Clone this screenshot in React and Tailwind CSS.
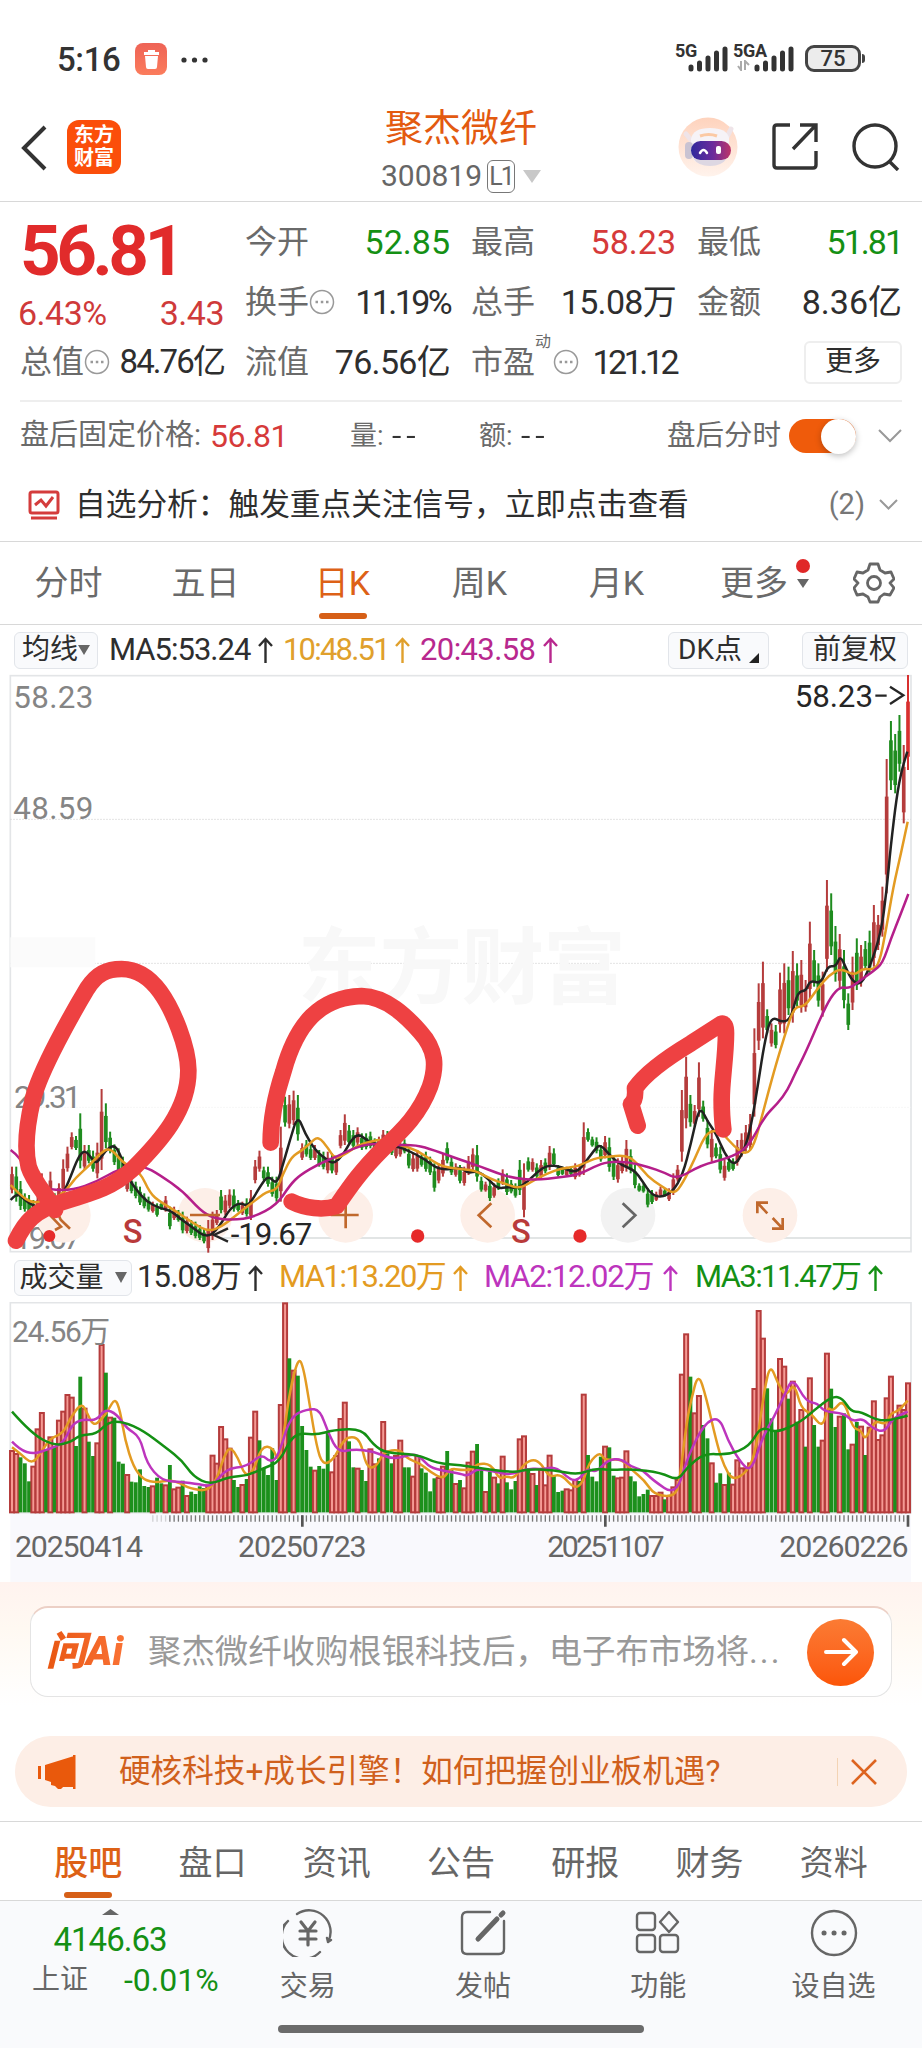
import clsx from "clsx";

const STEP = 12.8;
const X0 = 36;

// top of each volume bar + colour (R = up, G = down)
const VOLUME = `603R 612R 622G 640G 694G 650R 538R 489R 597G 562R 590G 512R 485R 435R 443R 588G 380G 476R 575G 618G
580R 285R 368G 503R 503G 635G 641G 675R 695G 697G 658G 708G 711G 709R 683G 700G 706R 645G 718R 713R
692G 738R 725G 732G 709G 714G 706R 617R 641R 531R 568R 596R 690G 711G 705R 687G 563R 485R 571G 655G
675G 595G 690G 465R 160R 325G 362R 377G 528G 600G 650G 662R 648G 656G 543G 667R 618R 507R 458R 574G
652G 656R 660G 693G 598R 643R 625G 516R 610G 640G 618R 572R 652G 652G 680R 618R 655G 668G 724G 685G
684R 650R 603G 660G 702R 690G 715R 638R 605R 582G 655G 726R 665G 683R 700G 620R 697G 718G 693G 568R
559R 655G 672R 705G 660R 706R 617R 675G 726G 722G 718R 721R 690R 693G 434R 615G 680G 694G 620G 590R
592G 677G 685R 683R 604R 679G 694G 739G 732G 719G 738R 738R 728R 748G 738R 712R 690R 374R 253R 380G
490R 438R 525G 565G 640R 698G 670G 705R 668G 704R 631R 655R 656R 640R 417R 183R 266R 415G 505G 545G
327R 350R 446G 395R 515G 480R 590G 385R 525G 590G 572R 311R 416G 531G 500R 490G 598G 584R 516G 530R
615G 533R 454R 570R 556R 445R 380R 505G 467R 480R 400R`;

// high,low + colour for every trading day
const CANDLES = `800,880R 800,905G 843,930G 880,935G 885,945G 900,945G 890,930R 820,920R 860,920G 815,910R
880,940G 850,900R 778,880R 740,815R 697,748R 708,750G 640,805G 735,810R 735,790G 752,815G
728,835R 567,810R 610,745G 695,760G 733,795G 745,825G 770,830G 820,875R 830,880G 845,895G
860,915G 880,925G 890,935G 905,938R 910,950G 905,930G 888,935R 920,988G 920,960R 930,965G
935,1000G 950,1000R 960,1005G 965,1015G 975,1020G 985,1030G 960,1058R 935,1020R 930,975R 870,940G
885,945R 868,925R 868,935G 900,935G 905,945R 895,950G 870,960R 780,850R 752,815R 800,840G
800,860G 830,890G 830,905G 680,905R 590,680G 585,685R 572,675R 585,722G 730,780R 720,770G
735,780G 735,780R 750,800G 755,808G 755,820R 760,820G 770,825R 690,745R 643,735R 675,735G
690,745G 682,735R 700,750G 700,748G 695,745G 715,760G 710,745R 690,740R 693,750G 720,765G
730,775R 720,770R 718,760G 745,805G 760,815R 750,815R 760,800G 755,815G 770,825G 790,875G
790,850R 760,830R 727,790G 770,825G 790,830R 795,850G 800,857R 768,825R 745,810R 735,845G
830,875G 845,875R 840,903G 850,893R 835,870G 808,855R 820,885G 840,880G 850,893G 780,885G
790,952R 772,815G 775,815R 790,835G 780,835R 775,820G 738,810R 745,800G 795,830G 800,825G
800,830R 800,825G 790,838R 795,830R 667,825R 685,725G 710,740G 712,760G 735,785G 708,775R
713,815G 770,840G 775,848R 770,820R 720,815R 748,820G 795,865G 850,875G 850,878G 865,922G
870,912G 875,903R 860,890R 865,890G 865,903R 820,885R 795,845R 570,785R 470,685R 585,680G
615,680R 487,650R 602,665G 660,745G 690,785R 730,775G 740,820G 780,842R 775,815G 775,812G
720,797R 700,770R 675,755R 642,750R 385,650R 250,450R 185,415R 328,400G 370,440R 375,445G
218,398R 190,400R 200,345G 153,368R 190,320G 180,338R 240,335R 65,300R 150,260G 190,320G
215,350R -60,215R -20,165G 78,245G 102,265R 150,325G 280,390G 170,330R 115,270G 135,260R
123,210G 92,220G 15,200R 45,150R -40,110R -423,-20R -537,-330G -498,-320G -555,-385G -465,-230R
-675,-390R`;

const volumes = VOLUME.split(/\s+/).map((v) => ({ top: parseInt(v), up: v.endsWith("R") }));
const candles = CANDLES.split(/\s+/).map((c) => {
  const [high, low] = c.slice(0, -1).split(",").map(Number);
  return { high, low, up: c.endsWith("R") };
});

// smooth a list of "x,y" points with midpoint quadratics
const smooth = (text) => {
  const p = text.trim().split(/\s+/).map((s) => s.split(",").map(Number));
  let d = `M${p[0][0]} ${p[0][1]}`;
  for (let i = 1; i < p.length - 1; i++) {
    d += ` Q${p[i][0]} ${p[i][1]} ${(p[i][0] + p[i + 1][0]) / 2} ${(p[i][1] + p[i + 1][1]) / 2}`;
  }
  const last = p[p.length - 1];
  return d + ` L${last[0]} ${last[1]}`;
};

const MA5 = smooth(`32,900 50,878 75,900 100,918 130,925 165,915 190,880 210,835 235,770 255,750 275,775 290,792 315,752 342,734 360,760 385,835 410,870 440,905 480,925 510,930 540,955 580,985 622,1014 655,985 690,925 720,908 745,920 780,860 805,825 830,855 850,790 870,720 893,645 915,700 945,750 975,775 1000,793 1030,765 1050,725 1075,700 1105,725 1140,735 1190,738 1225,752 1270,775 1320,812 1383,800
1403,820 1433,812 1463,835 1493,867 1523,860 1553,865 1583,845 1613,815 1643,795 1683,800 1728,820 1758,785 1783,750 1801,732 1833,770 1863,795 1903,810 1928,845 1953,882 1983,893 2018,875 2048,825 2073,730 2093,640 2105,628 2123,665 2148,700 2173,760 2203,800 2233,750 2253,680 2273,560 2293,430 2313,348 2348,368 2373,355 2393,275 2418,273 2430,240 2463,252 2483,198 2508,200 2521,166 2538,205 2558,245 2583,254 2608,205 2643,100 2660,-30 2672,-160 2690,-310 2705,-390 2722,-445`);
const MA10 = smooth(`32,855 60,885 95,908 125,905 160,900 200,870 225,835 270,795 300,760 330,742 370,790 420,815 450,880 480,905 530,935 580,970 625,995 665,980 710,945 760,905 800,875 830,870 850,820 875,770 905,752 930,730 955,708 985,745 1005,778 1040,760 1075,735 1110,725 1150,717 1200,735 1250,750 1300,785 1330,800 1383,808
1423,810 1473,838 1513,850 1558,867 1603,840 1643,820 1683,805 1733,800 1783,775 1823,770 1873,766 1903,780 1943,830 1983,858 2023,883 2048,850 2083,780 2113,710 2138,690 2168,700 2203,740 2238,765 2263,735 2288,640 2323,510 2353,410 2383,318 2413,322 2453,265 2488,225 2523,205 2563,227 2588,205 2618,210 2638,190 2658,90 2680,-40 2703,-140 2723,-235`);
const MA20 = smooth(`32,750 60,770 100,850 150,870 220,870 290,845 360,805 430,797 480,825 550,875 600,930 640,955 700,960 760,952 830,915 870,855 900,825 960,790 1010,770 1060,745 1110,730 1180,735 1250,735 1300,750 1383,780
1443,800 1493,820 1543,835 1613,840 1673,832 1733,825 1783,800 1823,785 1883,785 1943,800 1993,818 2033,837 2103,795 2183,775 2243,745 2293,650 2333,610 2363,570 2383,525 2418,455 2463,350 2493,290 2521,260 2548,266 2583,240 2618,215 2648,190 2673,115 2701,45 2725,-18`);

const VMA1 = smooth(`36,592 60,610 97,643 125,605 150,565 190,550 210,505 245,458 262,490 280,528 305,508 325,480 345,444 360,480 375,570 400,650 430,690 470,698 510,690 540,700 570,715 620,724 650,690 670,625 690,588 715,625 735,678 760,665 785,588 820,592 835,640 850,560 870,420 895,322 910,350 930,470 950,590 968,645 1000,630 1025,580 1045,560 1080,565 1100,655 1130,650 1150,605 1200,598 1220,625 1260,640 1290,665 1330,688 1350,655 1383,660
1413,660 1433,640 1473,642 1498,688 1518,678 1543,686 1573,640 1601,628 1623,640 1648,682 1683,672 1723,716 1748,700 1768,635 1801,606 1813,632 1863,626 1893,658 1933,690 1963,735 2023,740 2038,700 2058,530 2073,450 2095,368 2118,440 2153,590 2173,650 2198,692 2243,665 2268,600 2293,420 2311,342 2333,400 2358,440 2383,398 2403,475 2433,490 2468,534 2483,470 2498,485 2531,446 2558,535 2583,540 2596,572 2623,510 2658,525 2673,488 2693,485 2723,452`);
const VMA2 = smooth(`36,575 60,600 100,612 140,600 190,580 215,525 245,508 290,512 315,477 350,492 380,535 420,560 440,640 485,692 540,695 600,703 635,710 680,655 740,650 785,612 810,637 835,620 870,500 925,476 960,480 985,550 1015,607 1060,598 1120,603 1180,630 1240,610 1265,625 1290,652 1330,662 1383,672
1403,678 1433,655 1483,665 1533,675 1583,655 1628,658 1668,650 1713,692 1738,688 1763,655 1788,668 1823,630 1863,626 1893,650 1928,660 1958,690 2028,738 2063,620 2113,520 2158,500 2183,570 2218,632 2253,668 2288,560 2323,500 2353,435 2378,382 2418,455 2453,460 2473,485 2533,490 2558,515 2588,505 2618,535 2653,547 2678,505 2723,485`);
const VMA3 = smooth(`36,485 95,552 165,588 215,575 240,555 290,552 325,515 370,515 430,542 500,595 545,630 580,680 630,704 690,680 740,678 790,655 840,635 880,548 950,555 1000,540 1085,536 1120,585 1160,610 1250,612 1310,640 1383,645
1443,655 1543,668 1583,657 1663,660 1733,675 1783,655 1833,660 1893,657 1983,668 2033,692 2063,650 2113,610 2183,615 2248,590 2283,528 2328,550 2403,515 2443,480 2498,438 2528,445 2553,485 2583,485 2643,517 2723,497`);

const Signal = () => (
  <svg width="40" height="26" viewBox="0 0 40 26" stroke="#333" strokeWidth="5" strokeLinecap="round">
    <path d="M3 21v2M11.500 17v6M20 12v11M28.500 7v16M37 3v20" />
  </svg>
);

const StatusBar = () => (
  <div className="flex h-[92px] items-start pl-[57px] pr-[57px] pt-[43px] text-[#333]">
    <span className="text-[33px] leading-[34px] font-medium tracking-[-0.4px]">5:16</span>
    <span className="ml-[15px] flex size-8 items-center justify-center rounded-lg bg-gradient-to-b from-[#ee6356] to-[#fb7c5c]">
      <svg width="17" height="19" viewBox="0 0 17 19" fill="#fff">
        <path d="M5 0h7v2h4v3H1V2h4zM2 6h13l-1 11q0 2-2 2H5q-2 0-2-2z" />
      </svg>
    </span>
    <svg className="ml-[14px] mt-[14px]" width="27" height="6" fill="#333">
      <circle cx="3" cy="3" r="2.6" />
      <circle cx="13.5" cy="3" r="2.6" />
      <circle cx="24" cy="3" r="2.6" />
    </svg>
    <span className="ml-auto -mt-[1px] -mr-[9px] text-[18px] leading-[18px] font-bold tracking-[-0.3px]">5G</span>
    <div className="mt-[3px]"><Signal /></div>
    <div className="ml-[5px] w-[28px]">
      <div className="-mt-[1px] text-[18px] leading-[18px] font-bold tracking-[-0.3px]">5GA</div>
      <svg className="ml-1" width="14" height="11" stroke="#aaa" strokeWidth="2" fill="none">
        <path d="M1 6l3 4V1M8 10V1l4 4" />
      </svg>
    </div>
    <div className="-ml-[7px] mt-[3px]"><Signal /></div>
    <div className="ml-[11px] mt-[2px] flex items-center">
      <span className="flex h-[27px] w-[56px] items-center justify-center rounded-[9px] border-[3px] border-[#444] bg-[#ececec] text-[22px] leading-none font-medium">75</span>
      <span className="ml-[1px] h-[9px] w-[3px] rounded-r bg-[#444]" />
    </div>
  </div>
);

const Robot = () => (
  <svg width="60" height="60" viewBox="0 0 60 60">
    <defs>
      <linearGradient id="visor">
        <stop stopColor="#2f2a9d" />
        <stop offset=".55" stopColor="#6b2b9c" />
        <stop offset="1" stopColor="#bd3468" />
      </linearGradient>
      <linearGradient id="halo" x2="0" y2="1">
        <stop stopColor="#fed3bd" />
        <stop offset="1" stopColor="#fff3ec" />
      </linearGradient>
    </defs>
    <circle cx="30" cy="30" r="29.5" fill="url(#halo)" />
    <path d="M8 17l5 6M53 12l-4 8" stroke="#efe4e8" strokeWidth="5" strokeLinecap="round" />
    <path d="M13 34V22q2-11 19-11t19 10v14q-2 13-20 13T13 34z" fill="#f6f3f7" />
    <path d="M22 19q9-3 17 0" stroke="#fbc9a4" strokeWidth="3" fill="none" />
    <rect x="7" y="25" width="8" height="17" rx="4" fill="#c9c3d2" />
    <path d="M15 41h34q-5 8-17 8t-17-8z" fill="#ddd7e2" />
    <rect x="13" y="24" width="40" height="19" rx="9.5" fill="url(#visor)" />
    <path d="M22 36q3.500-6 7 0" stroke="#fff" strokeWidth="2.5" fill="none" strokeLinecap="round" />
    <rect x="38" y="29" width="5" height="8" rx="2" fill="#fff" />
  </svg>
);

const Header = () => (
  <div className="flex h-[110px] items-start border-b border-[#d8d8d8]">
    <svg className="ml-5 mt-[33px]" width="28" height="46" fill="none" stroke="#333" strokeWidth="4">
      <path d="M25 2L4 23l21 21" />
    </svg>
    <div className="ml-[19px] mt-[28px] flex size-[54px] flex-col items-center justify-center rounded-xl bg-[#fb4e0a] text-[20px] leading-[23px] font-bold text-white">
      <span>东方</span>
      <span>财富</span>
    </div>
    <div className="ml-[240px] flex w-[200px] flex-col items-center pt-[15px]">
      <span className="text-[38px] leading-[42px] text-[#e35a10]">聚杰微纤</span>
      <div className="mt-[10px] flex items-center text-[#666]">
        <span className="text-[30px] leading-[34px]">300819</span>
        <span className="ml-[5px] flex h-[33px] w-[28px] items-center justify-center rounded-md border-[1.5px] border-[#777] text-[25px] leading-none tracking-[-2px]">L1</span>
        <svg className="ml-2" width="18" height="13"><path d="M0 0h18L9 13z" fill="#c8c8c8" /></svg>
      </div>
    </div>
    <div className="ml-auto flex items-center gap-[34px] pr-[22px] pt-[25px]">
      <Robot />
      <svg width="46" height="48" viewBox="0 0 46 48" fill="none" stroke="#333" strokeWidth="3.4">
        <path d="M18 2H5Q2 2 2 5v37q0 3 3 3h36q3 0 3-3V28M28 2h16v17M44 2L21 26" />
      </svg>
      <svg width="48" height="48" viewBox="0 0 48 48" fill="none" stroke="#333" strokeWidth="3.4">
        <circle cx="23" cy="23" r="21" />
        <path d="M37 38l9 9" />
      </svg>
    </div>
  </div>
);

const Dots = () => (
  <svg width="26" height="26" viewBox="0 0 26 26" fill="none" stroke="#999" strokeWidth="1.5">
    <circle cx="13" cy="13" r="11.5" />
    <path d="M6.500 13h2.500M11.800 13h2.500M17 13h2.500" strokeWidth="2.5" />
  </svg>
);

const Cell = ({ label, value, color = "text-[#2e2e2e]", tight, dots, sup }) => (
  <div className="flex h-[60px] w-[205px] items-center justify-between whitespace-nowrap">
    <span className="flex items-center text-[32px] text-[#6a6a6a]">
      {label}
      {sup && <sup className="-mr-[14px] -top-5 text-[16px]">{sup}</sup>}
      {dots && <span className={sup && "ml-[16px]"}><Dots /></span>}
    </span>
    <span className={clsx("text-[34px]", color, tight)}>{value}</span>
  </div>
);

const Chevron = () => (
  <svg width="24" height="14" viewBox="0 0 24 14" fill="none" stroke="#999" strokeWidth="2">
    <path d="M1 1l11 11L23 1" />
  </svg>
);

const Quote = () => (
  <div className="h-[340px] border-b border-[#d8d8d8]">
    <div className="flex h-[198px] gap-[21px] px-5 pt-[10px]">
      <div className="w-[205px]">
        <div className="h-[82px] text-[71px] leading-[78px] font-bold tracking-[-4.6px] text-[#e12b2b]">56.81</div>
        <div className="-ml-[2px] flex h-[38px] items-center justify-between text-[34px] tracking-[-0.5px] text-[#cf3a3a]">
          <span>6.43%</span>
          <span>3.43</span>
        </div>
        <div className="flex h-[60px] items-center justify-between whitespace-nowrap text-[32px] text-[#6a6a6a]">
          <span className="flex items-center">总值<Dots /></span>
          <span className="text-[33px] tracking-[-1.9px] text-[#2e2e2e]">84.76亿</span>
        </div>
      </div>
      <div>
        <Cell label="今开" value="52.85" color="text-[#149014]" />
        <Cell label="换手" value="11.19%" tight="tracking-[-2.6px]" dots />
        <Cell label="流值" value="76.56亿" tight="tracking-[-0.7px]" />
      </div>
      <div>
        <Cell label="最高" value="58.23" color="text-[#d63a3a]" />
        <Cell label="总手" value="15.08万" tight="tracking-[-0.7px]" />
        <Cell label="市盈" value="121.12" tight="tracking-[-3.5px]" sup="动" dots />
      </div>
      <div>
        <Cell label="最低" value="51.81" color="text-[#149014]" tight="tracking-[-2px]" />
        <Cell label="金额" value="8.36亿" />
        <div className="flex h-[60px] items-center justify-end">
          <span className="flex h-[43px] w-[98px] items-center justify-center rounded-md border-2 border-[#eee] text-[28px] text-[#2e2e2e]">更多</span>
        </div>
      </div>
    </div>
    <div className="mx-5 flex h-[70px] items-center border-t-2 border-[#eee] text-[29px] whitespace-nowrap text-[#6a6a6a]">
      <span className="w-[190px]">盘后固定价格:</span>
      <span className="w-[140px] text-[32px] tracking-[-0.5px] text-[#d63a3a]">56.81</span>
      <span className="flex w-[129px] items-center text-[27px]">
        量: <span className="ml-2 tracking-[4px] text-[#333] scale-x-125 origin-left">--</span>
      </span>
      <span className="flex items-center text-[27px]">
        额: <span className="ml-2 tracking-[4px] text-[#333] scale-x-125 origin-left">--</span>
      </span>
      <span className="ml-auto text-[28.5px]">盘后分时</span>
      <span className="ml-[8px] flex h-[34px] w-[67px] justify-end rounded-full bg-[#ef5b0b]">
        <span className="size-[35px] rounded-full bg-white shadow-[0_2px_6px_rgba(0,0,0,0.25)]" />
      </span>
      <span className="ml-[22px]"><Chevron /></span>
    </div>
    <div className="flex h-[70px] items-center pl-7 pr-6 whitespace-nowrap">
      <svg width="32" height="30" viewBox="0 0 32 30" fill="none" stroke="#d43c3c" strokeWidth="3">
        <rect x="2" y="2" width="28" height="21" rx="2" />
        <path d="M7 15l6-5 5 6 7-9M3 28h26" />
      </svg>
      <span className="ml-[15px] text-[30.7px] text-[#2e2e2e]">自选分析：触发重点关注信号，立即点击查看</span>
      <span className="ml-auto mr-[14px] text-[29px] text-[#777]">(2)</span>
      <svg width="19" height="12" fill="none" stroke="#999" strokeWidth="2"><path d="M1 1l8.500 8.500L18 1" /></svg>
    </div>
  </div>
);

const PERIODS = ["分时", "五日", "日K", "周K", "月K"];

const Periods = () => (
  <div className="flex h-[83px] items-center border-b border-[#d8d8d8] text-[34px] text-[#6a6a6a]">
    {PERIODS.map((p) => (
      <div key={p} className={clsx("relative flex h-full w-[137px] items-center justify-center", p === "日K" && "text-[#dd6116]")}>
        {p}
        {p === "日K" && <span className="absolute bottom-[5px] h-[6px] w-[48px] rounded-full bg-[#d65f17]" />}
      </div>
    ))}
    <div className="relative ml-[35px] flex items-center">
      更多
      <svg className="ml-[9px]" width="12" height="9"><path d="M0 0h12L6 9z" fill="#666" /></svg>
      <span className="absolute top-[1px] -right-[1px] size-[14px] rounded-full bg-[#e02828]" />
    </div>
    <svg className="ml-[44px]" width="42" height="42" viewBox="0 0 42 42" fill="none" stroke="#666" strokeWidth="2.8" strokeLinejoin="round">
      <path d="M17 2h8l2 6 5 3 6-1 3 7-4 4 4 5-4 7-6-1-4 3-2 5h-8l-2-5-5-3-6 1-3-7 4-5-4-4 3-7 6 1 5-3z" />
      <circle cx="21" cy="21" r="6.5" />
    </svg>
  </div>
);

const Up = () => (
  <svg width="15" height="26" viewBox="0 0 15 26" fill="none" stroke="currentColor" strokeWidth="2.4">
    <path d="M7.500 26V2M1 9l6.500-7L14 9" />
  </svg>
);

const Legend = ({ color, width, children }) => (
  <span className={clsx("flex shrink-0 items-center justify-between text-[31px] whitespace-nowrap", color, width)}>
    {children}
    <Up />
  </span>
);

const pill = "flex shrink-0 items-center justify-center rounded-md border border-[#e2e5ea] bg-[#f9fafc] whitespace-nowrap text-[#2e2e2e]";

const MainLegend = () => (
  <div className="flex h-[50px] items-center pl-[14px] pr-[14px]">
    <span className={clsx(pill, "h-[37px] w-[84px] text-[28px]")}>
      均线
      <svg width="12" height="10"><path d="M0 0h12L6 10z" fill="#666" /></svg>
    </span>
    <div className="ml-[11px] flex gap-[10px]">
      <Legend color="text-[#2e2e2e] tracking-[-1px]" width="w-[164px]">MA5:53.24</Legend>
      <Legend color="text-[#e0a02c] tracking-[-1.8px]" width="w-[127px]">10:48.51</Legend>
      <Legend color="text-[#b8288e] tracking-[-0.6px]" width="w-[138px]">20:43.58</Legend>
    </div>
    <span className={clsx(pill, "ml-auto h-[37px] w-[101px] gap-[7px] text-[28px]")}>
      DK点
      <svg className="mt-4" width="10" height="10"><path d="M10 0v10H0z" fill="#222" /></svg>
    </span>
    <span className={clsx(pill, "ml-[33px] h-[37px] w-[106px] text-[28px]")}>前复权</span>
  </div>
);

const Scribbles = () => (
  <g fill="none" stroke="#ee4142" strokeWidth="50" strokeLinecap="round" strokeLinejoin="round">
    <path d="M48 1022C75 965 105 930 190 905C290 875 340 860 400 805C480 725 566 630 565 510C564 440 520 330 480 275C440 220 400 207 365 207C320 207 290 222 262 265C220 335 120 510 98 600C78 685 74 750 86 800C100 845 140 885 165 930" />
    <path d="M812 728C812 680 822 600 850 515C890 370 960 292 1085 288C1160 290 1220 350 1260 395C1310 450 1310 500 1290 560C1260 640 1210 690 1150 745C1080 815 1050 860 1010 918C970 932 915 925 875 905" />
    <path d="M1913 677L1893 612Q1908 600 1905 565C1943 510 2023 460 2073 430L2163 372Q2178 366 2178 400C2178 470 2165 540 2165 600Q2165 650 2170 688" />
  </g>
);

const PriceChart = () => (
  <svg className="block overflow-visible" width="922" height="578" viewBox="0 -675 2766 1734" fontFamily="Roboto, 'Noto Sans CJK SC', sans-serif">
    <rect x="31" y="-673" width="2702" height="1728" fill="none" stroke="#e3e5e7" strokeWidth="5" />
    <g stroke="#d5d5d5" strokeWidth="3" strokeDasharray="4 5">
      <path d="M31 -242H2733M31 190H2733" />
      <path d="M31 622H2733" stroke="#f2f2f2" />
    </g>
    <path d="M600 1014H2733" stroke="#d9dcdc" strokeWidth="5" />
    <text x="893" y="290" fontSize="248" fontWeight="bold" textLength="985" fill="#f8f8f8">东方财富</text>
    <rect x="31" y="112" width="255" height="90" fill="#fbfbfb" />
    <g fill="#858585" fontSize="94">
      <text x="40" y="-575" textLength="240">58.23</text>
      <text x="40" y="-243" textLength="240">48.59</text>
      <text x="42" y="624" textLength="202">29.31</text>
      <text x="42" y="1047" textLength="202">19.67</text>
    </g>
    <g fill="#fdefe8">
      {[190, 615, 1037, 1463, 2310].map((x) => <circle key={x} cx={x} cy="946" r="82" />)}
      <circle cx="1884" cy="946" r="82" fill="#f2f2f2" />
    </g>
    {candles.map((c, i) => {
      const x = X0 + i * STEP;
      const h = c.low - c.high;
      const color = c.up ? "#b53c3c" : "#1f8c1f";
      const last = i === candles.length - 1;
      return (
        <g key={i} fill={last ? "#d8302f" : color}>
          <rect x={x - 3} y={c.high} width="6" height={h} />
          <rect x={x - 5.5} y={c.high + h * 0.28} width="11" height={h * 0.58} />
        </g>
      );
    })}
    <g fill="none" strokeWidth="7.5" strokeLinejoin="round">
      <path d={MA5} stroke="#222" />
      <path d={MA10} stroke="#e39b22" />
      <path d={MA20} stroke="#b51f8a" />
    </g>
    <g fill="none" stroke="#c0682c" strokeWidth="8">
      <path d="M145 940l38 40-18 10M172 935l10 24 28 27" />
      <path d="M570 945h90M992 945h84M1037 905v80" />
      <path d="M1474 910l-38 36 38 36" />
      <path d="M1868 910l38 36-38 36" stroke="#666" />
      <path d="M2272 940v-32h32M2272 908l30 32M2348 954v32h-32M2348 986l-30-32" />
    </g>
    <g fill="#e62a2a">
      <circle cx="148" cy="1008" r="18" />
      <circle cx="1253" cy="1008" r="20" />
      <circle cx="1740" cy="1008" r="20" />
    </g>
    <g fill="#b93a3a" fontSize="98" fontWeight="500">
      <text x="368" y="1028">S</text>
      <text x="1533" y="1028">S</text>
    </g>
    <g fill="#262626" fontSize="94">
      <text x="692" y="1036" textLength="245">-19.67</text>
      <text x="2384" y="-580" textLength="235">58.23</text>
    </g>
    <path d="M2626 -613h34M2670 -640l40 26-40 26M684 985l-42 20 42 20" fill="none" stroke="#262626" strokeWidth="7" />
    <Scribbles />
  </svg>
);

const VolumeLegend = () => (
  <div className="flex h-[49px] items-center pl-[14px]">
    <span className={clsx(pill, "h-[36px] w-[118px] gap-[11px] text-[28px]")}>
      成交量
      <svg width="12" height="11"><path d="M0 0h12L6 11z" fill="#666" /></svg>
    </span>
    <div className="ml-[5px] flex tracking-[-0.8px]">
      <Legend color="text-[#2e2e2e]" width="w-[126px]">15.08万</Legend>
      <Legend color="ml-[16px] text-[#e39b22] tracking-[-1.5px]" width="w-[189px]">MA1:13.20万</Legend>
      <Legend color="ml-[16px] text-[#bd35bd] tracking-[-1.2px]" width="w-[194px]">MA2:12.02万</Legend>
      <Legend color="ml-[17px] text-[#149014] tracking-[-1.6px]" width="w-[188px]">MA3:11.47万</Legend>
    </div>
  </div>
);

const VolumeChart = () => (
  <svg className="block" width="922" height="280" viewBox="0 156 2766 840" fontFamily="Roboto, 'Noto Sans CJK SC', sans-serif">
    <rect x="31" y="788" width="2702" height="208" fill="#f9f9fd" />
    <rect x="31" y="158" width="2702" height="630" fill="#fff" stroke="#e3e5e7" strokeWidth="5" />
    {volumes.map((v, i) => (
      <rect
        key={i}
        x={X0 + i * STEP - (v.up ? 6 : 5.8)}
        y={v.top}
        width={v.up ? 12 : 11.6}
        height={787 - v.top}
        fill={v.up ? "#f59a94" : "#1c901c"}
        stroke={v.up ? "#b53c3c" : "none"}
        strokeWidth="6"
      />
    ))}
    <g fill="none" strokeWidth="7.5" strokeLinejoin="round">
      <path d={VMA1} stroke="#e39b22" />
      <path d={VMA2} stroke="#bd35bd" />
      <path d={VMA3} stroke="#149014" />
    </g>
    <text x="36" y="277" fontSize="90" textLength="295" fill="#858585">24.56万</text>
    <g stroke="#777" strokeWidth="4">
      {volumes.map((_, i) => i > 32 && <path key={i} d={`M${X0 + i * STEP} 796v19`} strokeOpacity={i < 37 ? 0.3 : 1} />)}
    </g>
    <path d="M907 796v34M1816 796v34M2724 796v34" stroke="#555" strokeWidth="8" />
    <g fill="#666" fontSize="91">
      <text x="45" y="921" textLength="384">20250414</text>
      <text x="714" y="921" textLength="386">20250723</text>
      <text x="1642" y="921" textLength="352">20251107</text>
      <text x="2338" y="921" textLength="388">20260226</text>
    </g>
  </svg>
);

const AskAi = () => (
  <div className="h-[154px] bg-gradient-to-b from-[#fff3ef] via-[#fff9f2] via-30% to-white to-80% px-[30px] pt-[24px]">
    <div className="flex h-[91px] items-center rounded-[18px] border-[1.5px] border-[#e4e4e4] border-t-2 border-t-[#ecd0c6] bg-white pl-[15px] pr-[17px] whitespace-nowrap">
      <span className="w-[102px] bg-gradient-to-r from-[#e8560f] to-[#ff7a3c] bg-clip-text text-[40px] font-black text-transparent italic">问Ai</span>
      <span className="text-[33.4px] text-[#999]">
        聚杰微纤收购根银科技后，电子布市场将<span className="tracking-[2px]">...</span>
      </span>
      <span className="ml-auto flex size-[67px] shrink-0 items-center justify-center rounded-full bg-gradient-to-b from-[#fb7b33] to-[#fc5506]">
        <svg width="34" height="30" viewBox="0 0 34 30" fill="none" stroke="#fff" strokeWidth="4" strokeLinecap="round" strokeLinejoin="round">
          <path d="M2 15h29M20 3l12 12-12 12" />
        </svg>
      </span>
    </div>
  </div>
);

const Banner = () => (
  <div className="mx-[15px] flex h-[71px] items-center rounded-full bg-[#fdeee6] pl-[23px] pr-[30px] whitespace-nowrap">
    <svg width="38" height="34" viewBox="0 0 38 34" fill="#e9590c">
      <path d="M0 11h3v13H0zM7 10L36 1v31H25q-2 3-5 2l-3-3-4-1v-3l-6-2zM35 0h2.500v34H35z" />
    </svg>
    <span className="ml-[43px] text-[31.6px] text-[#d0601c]">硬核科技+成长引擎！如何把握创业板机遇?</span>
    <span className="ml-auto h-[28px] w-px bg-[#f3d3b4]" />
    <svg className="ml-[13px]" width="26" height="26" fill="none" stroke="#dd6420" strokeWidth="2.6">
      <path d="M1 1l24 24M25 1L1 25" />
    </svg>
  </div>
);

const TABS = ["股吧", "盘口", "资讯", "公告", "研报", "财务", "资料"];

const Tabs = () => (
  <div className="mt-[14px] flex h-[80px] border-t border-b border-[#d8d8d8] px-[26px] text-[34px] text-[#666]">
    {TABS.map((t, i) => (
      <div key={t} className={clsx("relative flex flex-1 items-center justify-center pt-[5px]", i === 0 && "font-medium text-[#dd6116]")}>
        {t}
        {i === 0 && <span className="absolute bottom-[2px] h-[6px] w-[48px] rounded-full bg-[#d65f17]" />}
      </div>
    ))}
  </div>
);

const ACTIONS = [
  {
    label: "交易",
    icon: (
      <>
        <path d="M14 5A21.500 21.500 0 0 1 45 33M37 43A21.500 21.500 0 0 1 5 12M1 16l4-4M45 33l3-2M45 33l-1-4" />
        <path d="M18 13l7 9 7-9M17 22h16M17 30h16M25 22v14" strokeWidth="3.2" />
      </>
    ),
  },
  {
    label: "发帖",
    icon: (
      <>
        <path d="M32 3H9Q4 3 4 8v32q0 5 5 5h32q5 0 5-5V12" />
        <path d="M20 30L39 10M43 6l2-2" strokeWidth="5" />
      </>
    ),
  },
  {
    label: "功能",
    icon: (
      <>
        <rect x="4" y="4" width="18" height="17" rx="3" />
        <rect x="4" y="26" width="18" height="17" rx="3" />
        <rect x="27" y="26" width="18" height="17" rx="3" />
        <path d="M36 3l9 10-9 10-9-10z" strokeLinejoin="round" />
      </>
    ),
  },
  {
    label: "设自选",
    icon: (
      <>
        <circle cx="25" cy="24" r="22" />
        <path d="M15 24h.1M25 24h.1M35 24h.1" strokeWidth="5" />
      </>
    ),
  },
];

const BottomBar = () => (
  <div className="flex h-[148px] flex-col items-center bg-[#f9fafc]">
    <div className="flex h-[124px] w-full">
      <div className="w-[220px] whitespace-nowrap">
        <svg className="mt-[8px] ml-[102px]" width="17" height="6"><path d="M0 6L8.500 0 17 6z" fill="#666" /></svg>
        <div className="pt-[7px] text-center text-[33px] leading-[36px] tracking-[-1px] text-[#149014]">4146.63</div>
        <div className="mt-[4px] flex items-center pl-[32px] leading-[36px]">
          <span className="text-[28px] text-[#666]">上证</span>
          <span className="ml-[36px] text-[32px] text-[#149014]">-0.01%</span>
        </div>
      </div>
      {ACTIONS.map((a) => (
        <div key={a.label} className="flex w-[175.3px] flex-col items-center pt-[8px] text-[28px] text-[#666]">
          <svg width="50" height="48" viewBox="0 0 50 48" fill="none" stroke="#666" strokeWidth="2.4" strokeLinecap="round">{a.icon}</svg>
          <span className="mt-[10px] leading-[40px]">{a.label}</span>
        </div>
      ))}
    </div>
    <div className="h-[8px] w-[366px] rounded-full bg-[#6b6b6b]" />
  </div>
);

const App = () => {
  return (
    <div className="h-[2048px] w-[922px] overflow-hidden bg-white font-['Roboto','Noto_Sans_CJK_SC',sans-serif]">
      <StatusBar />
      <Header />
      <Quote />
      <Periods />
      <MainLegend />
      <PriceChart />
      <VolumeLegend />
      <VolumeChart />
      <AskAi />
      <Banner />
      <Tabs />
      <BottomBar />
    </div>
  );
};

export default App;
